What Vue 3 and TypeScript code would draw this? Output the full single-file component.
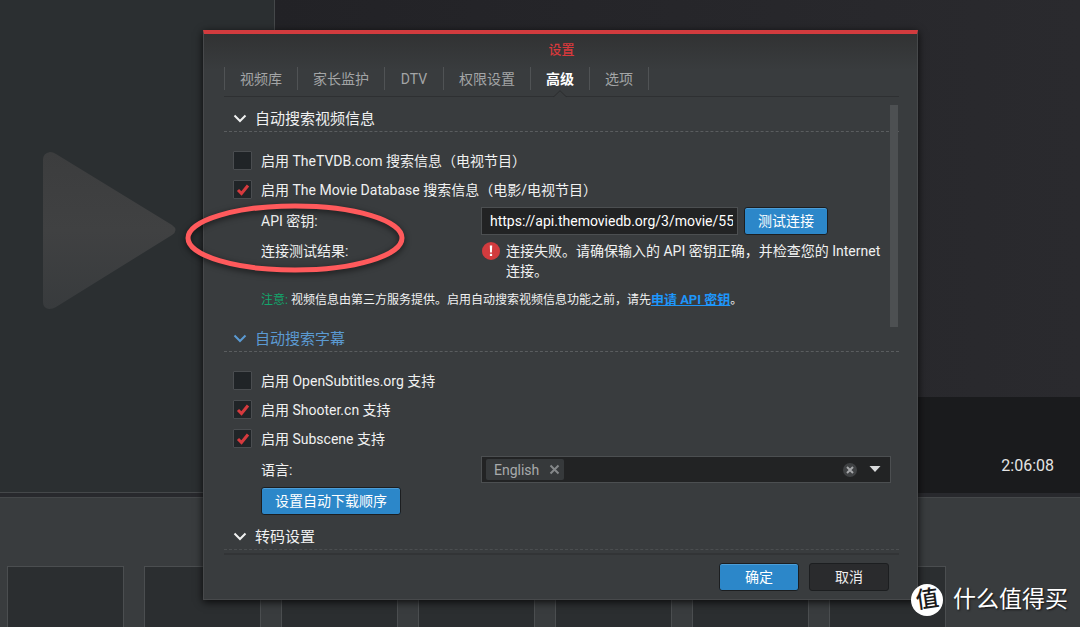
<script setup lang="ts">
import { ref } from 'vue'

interface Option {
  id: string
  label: string
  checked: boolean
}

const tabs: string[] = ['视频库', '家长监护', 'DTV', '权限设置', '高级', '选项']
const activeTab = ref<string>('高级')

const infoOptions = ref<Option[]>([
  { id: 'tvdb', label: '启用 TheTVDB.com 搜索信息（电视节目）', checked: false },
  { id: 'tmdb', label: '启用 The Movie Database 搜索信息（电影/电视节目）', checked: true },
])

const subtitleOptions = ref<Option[]>([
  { id: 'opensubtitles', label: '启用 OpenSubtitles.org 支持', checked: false },
  { id: 'shooter', label: '启用 Shooter.cn 支持', checked: true },
  { id: 'subscene', label: '启用 Subscene 支持', checked: true },
])

const apiKey = ref<string>('https://api.themoviedb.org/3/movie/550')
const languages = ref<string[]>(['English'])
const cards: number[] = [1, 2, 3, 4, 5, 6, 7]

function removeLanguage(name: string): void {
  languages.value = languages.value.filter((item) => item !== name)
}
</script>

<template>
  <div class="screen">
    <div class="backdrop">
      <div class="stage">
        <div class="preview">
          <svg class="play" width="136" height="160" viewBox="0 0 136 160">
            <defs>
              <linearGradient id="playFill" x1="0" y1="0" x2="0" y2="1">
                <stop offset="0" stop-color="#3c3d3e" />
                <stop offset="0.5" stop-color="#404142" />
                <stop offset="1" stop-color="#383b3d" />
              </linearGradient>
            </defs>
            <path d="M2 9 Q2 2 9 1 Q12 1 15 3 L131 74 Q138 79 131 84 L15 156 Q12 158 8 158 Q2 157 2 151 Z" fill="url(#playFill)" />
          </svg>
        </div>
        <div class="video">
          <div class="controls"><span class="time">2:06:08</span></div>
        </div>
      </div>
      <div class="shelf">
        <div v-for="card in cards" :key="card" class="card"></div>
      </div>
    </div>

    <section class="dialog" role="dialog" aria-labelledby="dialogTitle">
      <h1 id="dialogTitle" class="title">设置</h1>
      <nav class="tabs" role="tablist">
        <button
          v-for="tab in tabs"
          :key="tab"
          type="button"
          role="tab"
          class="tab"
          :class="{ active: tab === activeTab }"
          :aria-selected="tab === activeTab"
          @click="activeTab = tab"
        >
          {{ tab }}
          <svg v-if="tab === activeTab" class="notch" width="14" height="8" viewBox="0 0 14 8">
            <path d="M0 8 L1 6.5 L7 0.5 L13 6.5 L14 8 Z" fill="#393c3e" />
            <path d="M0 6.5 H1 L7 0.7 L13 6.5 H14" fill="none" stroke="#2b2d2f" />
          </svg>
        </button>
      </nav>

      <div class="content">
        <h2 class="section">
          <svg class="chevron" width="14" height="9" viewBox="0 0 14 9"><path d="M1.5 1.5 L7 7 L12.5 1.5" /></svg>
          自动搜索视频信息
        </h2>
        <div class="group">
          <div v-for="option in infoOptions" :key="option.id" class="check-row">
            <span class="box">
              <input :id="option.id" v-model="option.checked" type="checkbox" />
              <svg v-if="option.checked" width="14" height="12" viewBox="0 0 14 12"><path d="M2 6 L5.5 9.5 L12 1.5" /></svg>
            </span>
            <label :for="option.id">{{ option.label }}</label>
          </div>
          <div class="field-row">
            <label class="field-label" for="apiKey">API 密钥:</label>
            <div class="field">
              <input id="apiKey" v-model="apiKey" class="text-box" type="text" />
              <button type="button" class="btn primary">测试连接</button>
            </div>
          </div>
          <div class="result-row">
            <span class="field-label">连接测试结果:</span>
            <div class="message">
              <svg class="alert" width="18" height="18" viewBox="0 0 18 18">
                <circle cx="9" cy="9" r="9" fill="#d23b3e" />
                <path d="M7.8 3.6 H10.2 L9.9 10.4 H8.1 Z" fill="#fff" />
                <rect x="7.9" y="11.8" width="2.2" height="2.2" fill="#fff" />
              </svg>
              <p>连接失败。请确保输入的 API 密钥正确，并检查您的 Internet 连接。</p>
            </div>
          </div>
          <p class="note">
            <span class="hint">注意:</span> 视频信息由第三方服务提供。启用自动搜索视频信息功能之前，请先<a href="#">申请 API 密钥</a>。
          </p>
        </div>

        <h2 class="section current">
          <svg class="chevron" width="14" height="9" viewBox="0 0 14 9"><path d="M1.5 1.5 L7 7 L12.5 1.5" /></svg>
          自动搜索字幕
        </h2>
        <div class="group subtitles">
          <div v-for="option in subtitleOptions" :key="option.id" class="check-row">
            <span class="box">
              <input :id="option.id" v-model="option.checked" type="checkbox" />
              <svg v-if="option.checked" width="14" height="12" viewBox="0 0 14 12"><path d="M2 6 L5.5 9.5 L12 1.5" /></svg>
            </span>
            <label :for="option.id">{{ option.label }}</label>
          </div>
          <div class="field-row">
            <label class="field-label" for="language">语言:</label>
            <div class="combo">
              <span v-for="language in languages" :key="language" class="tag">
                {{ language }}
                <button type="button" class="icon-btn" :aria-label="language" @click="removeLanguage(language)">
                  <svg width="11" height="11" viewBox="0 0 11 11"><path d="M1.5 1.5 L9.5 9.5 M9.5 1.5 L1.5 9.5" stroke="#85888a" stroke-width="2" /></svg>
                </button>
              </span>
              <input id="language" class="combo-input" type="text" />
              <button type="button" class="icon-btn" aria-label="清除" @click="languages = []">
                <svg width="14" height="14" viewBox="0 0 14 14">
                  <circle cx="7" cy="7" r="7" fill="#3f4143" />
                  <path d="M4 4 L10 10 M10 4 L4 10" stroke="#a5a7a9" stroke-width="2" />
                </svg>
              </button>
              <button type="button" class="icon-btn arrow" aria-label="展开">
                <svg width="12" height="8" viewBox="0 0 12 8"><path d="M0.5 0 H11.5 L6 6 Z" fill="#d9dbdc" /></svg>
              </button>
            </div>
          </div>
          <button type="button" class="btn primary order">设置自动下载顺序</button>
        </div>

        <h2 class="section last">
          <svg class="chevron" width="14" height="9" viewBox="0 0 14 9"><path d="M1.5 1.5 L7 7 L12.5 1.5" /></svg>
          转码设置
        </h2>
        <div class="scrollbar"></div>
      </div>

      <footer class="footer">
        <button type="button" class="btn primary wide">确定</button>
        <button type="button" class="btn wide">取消</button>
      </footer>
    </section>

    <svg class="marker" width="238" height="90" viewBox="0 0 238 90">
      <ellipse cx="119" cy="45" rx="107" ry="32" fill="none" stroke="#ff5a5c" stroke-width="5" />
    </svg>

    <div class="brand">
      <span class="badge"><span class="glyph">值</span></span>
      <span>什么值得买</span>
    </div>
  </div>
</template>

<style>
body {
  margin: 0;
  background: #393c3e;
}
</style>

<style scoped>
.screen {
  position: relative;
  min-height: 100vh;
  overflow: hidden;
  font-family: Roboto, 'Noto Sans CJK SC', sans-serif;
  font-size: 14px;
  line-height: 20px;
  color: #f0f1f1;
}

.screen * {
  box-sizing: border-box;
}

button,
input {
  margin: 0;
  padding: 0;
  border: 0;
  background: none;
  color: inherit;
  font: inherit;
}

p,
h1,
h2 {
  margin: 0;
  font-weight: 400;
}

svg {
  display: block;
  flex: none;
}

.backdrop {
  display: flex;
  flex-direction: column;
  height: 100vh;
}

.stage {
  display: flex;
  flex: 1;
  border-bottom: 4px solid #28292d;
}

.preview {
  width: 275px;
  padding: 151px 0 0 41px;
  border-right: 1px solid #45484a;
  border-bottom: 1px solid #45484a;
  background: #2b2f31;
}

.video {
  display: flex;
  flex: 1;
  flex-direction: column;
  justify-content: flex-end;
  background: linear-gradient(90deg, #222226, #2a2a2e);
}

.controls {
  display: flex;
  align-items: flex-start;
  justify-content: flex-end;
  height: 96px;
  padding: 59px 26px 0 0;
  background: #1a1b1d;
}

.time {
  font-size: 16px;
  color: #e4e4e4;
}

.shelf {
  display: flex;
  gap: 20px;
  height: 130px;
  padding: 68px 7px 0;
  border-top: 1px solid #45484a;
  background: #393c3e;
}

.card {
  flex: none;
  width: 117px;
  border: 1px solid #4b4e50;
  border-bottom: 0;
  background: #2b2e30;
}

.dialog {
  position: absolute;
  top: 30px;
  left: 203px;
  right: 162px;
  padding: 0 18px 0 20px;
  border: 1px solid #47494b;
  border-top: 4px solid #d23b3e;
  background: linear-gradient(#313233, #393c3e 36px);
  box-shadow: 0 2px 8px rgba(0, 0, 0, 0.8);
}

.title {
  padding-top: 6px;
  font-size: 13px;
  font-weight: 500;
  text-align: center;
  color: #d8393c;
}

.tabs {
  display: flex;
  height: 37px;
  padding: 7px 0 6px;
  border-bottom: 1px solid #2e3032;
}

.tab {
  position: relative;
  height: 23px;
  min-width: 59px;
  padding: 0 15px;
  border-left: 1px solid #505355;
  color: #a3a5a6;
}

.tab:last-child {
  border-right: 1px solid #505355;
}

.tab.active {
  font-weight: 700;
  color: #fff;
}

.notch {
  position: absolute;
  bottom: -8px;
  left: 50%;
  margin-left: -7px;
}

.content {
  position: relative;
  padding-top: 9px;
}

.section {
  display: flex;
  align-items: center;
  gap: 8px;
  height: 26px;
  padding-left: 9px;
  border-bottom: 1px dashed #5a5d5f;
  font-size: 15px;
}

.section.current {
  color: #5b9ad2;
}

.section.last {
  border-bottom-color: #4b4e50;
}

.chevron path {
  fill: none;
  stroke: currentColor;
  stroke-width: 2;
}

.group {
  padding: 14px 8px 16px 9px;
}

.group.subtitles {
  padding-bottom: 9px;
}

.check-row {
  display: flex;
  align-items: center;
  gap: 9px;
  height: 29px;
}

.box {
  display: grid;
  place-items: center;
  width: 19px;
  height: 19px;
}

.box > * {
  grid-area: 1 / 1;
}

.box input {
  width: 19px;
  height: 19px;
  border: 1px solid #4a4d50;
  border-radius: 1px;
  background: #202427;
  appearance: none;
}

.box svg {
  z-index: 1;
  pointer-events: none;
}

.box path {
  fill: none;
  stroke: #d63a3e;
  stroke-width: 3;
}

.field-row {
  display: flex;
  align-items: center;
  height: 33px;
}

.field-label {
  flex: none;
  width: 248px;
  padding-left: 28px;
}

.field {
  display: flex;
  flex: 1;
  gap: 6px;
}

.text-box {
  width: 257px;
  height: 28px;
  padding: 0 4px 0 8px;
  border: 1px solid #4c4f51;
  background: #222324;
  color: #fff;
}

.btn {
  height: 28px;
  padding: 0 13px;
  border: 1px solid #1c1e20;
  border-radius: 3px;
  background: #2a2b2d;
  color: #eeeeee;
}

.btn.primary {
  background: #2c87c9;
  box-shadow: inset 0 1px 0 #4c9ed8;
  color: #fff;
}

.btn.wide {
  width: 80px;
}

.btn.order {
  display: block;
  margin: 1px 0 0 28px;
}

.result-row {
  display: flex;
  padding-top: 4px;
}

.message {
  display: flex;
  flex: 1;
  gap: 6px;
}

.alert {
  margin: 1px 0 0 1px;
}

.note {
  padding: 9px 0 0 28px;
  font-size: 12px;
}

.hint {
  color: #12a66c;
}

.note a {
  font-size: 13px;
  font-weight: 700;
  line-height: 16px;
  color: #1e96fa;
}

.combo {
  display: flex;
  flex: 1;
  align-items: center;
  height: 27px;
  padding: 0 9px 0 4px;
  border: 1px solid #4c4f51;
  background: #222324;
}

.tag {
  display: flex;
  align-items: center;
  gap: 10px;
  height: 21px;
  padding: 0 4px 0 8px;
  border-radius: 2px;
  background: #36393b;
  color: #a8aaab;
}

.combo-input {
  flex: 1;
  min-width: 0;
}

.arrow {
  margin-left: 12px;
}

.scrollbar {
  position: absolute;
  top: 8px;
  right: 1px;
  width: 8px;
  height: 222px;
  background: #4d5052;
}

.footer {
  display: flex;
  justify-content: flex-end;
  gap: 10px;
  margin-top: 3px;
  padding: 8px 10px 8px 0;
  border-top: 2px solid #323436;
}

.marker {
  position: absolute;
  top: 193px;
  left: 176px;
  filter: drop-shadow(0 2px 3px rgba(0, 0, 0, 0.6));
  pointer-events: none;
}

.brand {
  position: absolute;
  right: 12px;
  bottom: 11px;
  display: flex;
  align-items: center;
  gap: 10px;
  font-size: 23px;
  font-weight: 400;
  line-height: 32px;
  color: #fff;
  text-shadow: 1px 1px 2px rgba(0, 0, 0, 0.7);
}

.badge {
  display: grid;
  place-items: center;
  width: 32px;
  height: 32px;
  border-radius: 50%;
  background: #fff;
  color: #1b1b1b;
  text-shadow: none;
}

.glyph {
  font-weight: 500;
  transform: rotate(-8deg);
}
</style>
